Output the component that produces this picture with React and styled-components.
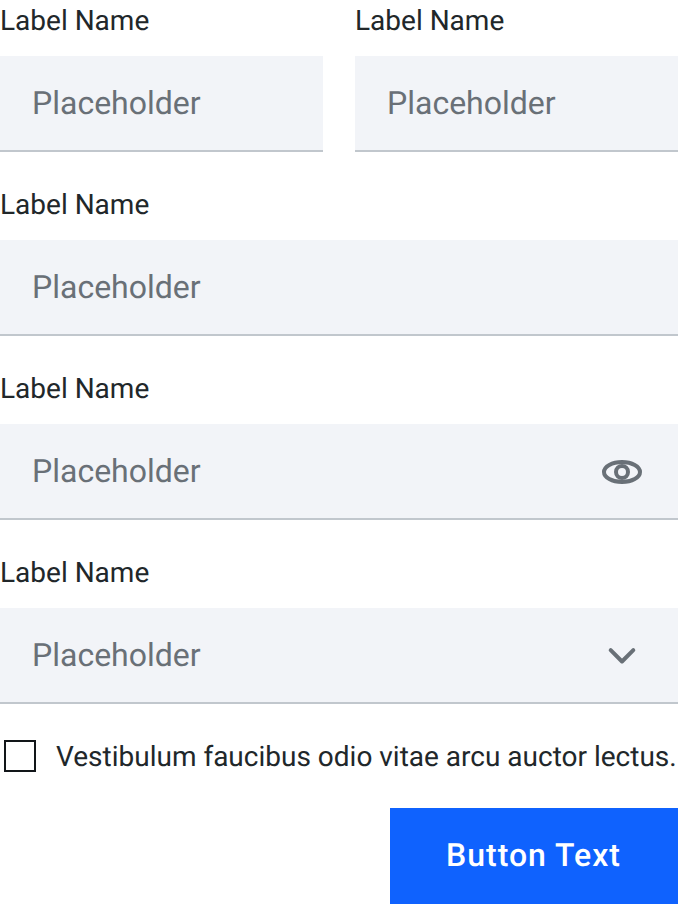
import React from "react";
import styled, { createGlobalStyle } from "styled-components";

const GlobalStyle = createGlobalStyle`
  * { box-sizing: border-box; }
  body {
    margin: 0;
    background: #fff;
    color: #21272a;
    font-family: Roboto, sans-serif;
    text-rendering: geometricPrecision;
  }
`;

const Form = styled.form`
  display: flex;
  flex-direction: column;
  width: 678px;
  height: 904px;
  overflow: hidden;
`;
const Row = styled.div`
  display: grid;
  grid-template-columns: 1fr 1fr;
  column-gap: 32px;
`;
const Field = styled.div`
  display: flex;
  flex-direction: column;
  gap: 14px;
  margin-bottom: 32px;
`;
const Label = styled.span`
  height: 42px;
  line-height: 42px;
  font-size: 28px;
  white-space: nowrap;
`;
const Control = styled.div`
  display: flex;
  align-items: center;
  justify-content: space-between;
  height: 96px;
  padding: 0 32px;
  background: #f2f4f8;
  border-bottom: 2px solid #c1c7cd;
`;
const Placeholder = styled.span`
  font-size: 32px;
  line-height: 44px;
  color: #697077;
`;
const Icon = styled.svg`
  flex: none;
  width: 48px;
  height: 48px;
  margin-top: 2px;
  fill: none;
  stroke: #697077;
  stroke-width: 4;
  stroke-linecap: round;
  stroke-linejoin: round;
`;
const CheckRow = styled.label`
  display: flex;
  align-items: center;
  gap: 20px;
  height: 40px;
  padding-left: 4px;
  font-size: 28px;
  line-height: 42px;
  white-space: nowrap;
`;
const CheckText = styled.span`
  padding-top: 2px;
`;
const Box = styled.span`
  flex: none;
  width: 32px;
  height: 32px;
  border: 2px solid #121619;
`;
const Button = styled.button`
  align-self: flex-end;
  width: 288px;
  height: 96px;
  margin-top: 32px;
  padding: 0 1px 2px 0;
  border: 0;
  background: #0f62fe;
  color: #fff;
  font: 500 32px/32px Roboto, sans-serif;
  letter-spacing: 1px;
  text-rendering: inherit;
`;

function TextField({ children }) {
  return (
    <Field>
      <Label>Label Name</Label>
      <Control>
        <Placeholder>Placeholder</Placeholder>
        {children}
      </Control>
    </Field>
  );
}

export default function App() {
  return (
    <Form>
      <GlobalStyle />
      <Row>
        <TextField />
        <TextField />
      </Row>
      <TextField />
      <TextField>
        <Icon viewBox="0 0 48 48">
          <ellipse cx="24" cy="24" rx="18" ry="10" />
          <circle cx="24" cy="24" r="6" />
        </Icon>
      </TextField>
      <TextField>
        <Icon viewBox="0 0 48 48">
          <path d="M12.7 18.2 24 29.5 35.3 18.2" />
        </Icon>
      </TextField>
      <CheckRow>
        <Box />
        <CheckText>Vestibulum faucibus odio vitae arcu auctor lectus.</CheckText>
      </CheckRow>
      <Button type="button">Button Text</Button>
    </Form>
  );
}
